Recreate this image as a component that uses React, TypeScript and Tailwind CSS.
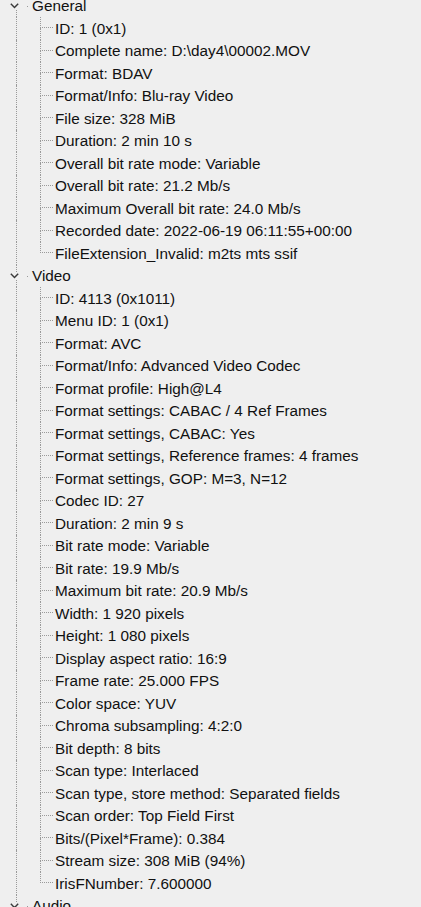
import React from "react";

const general = [
  "ID: 1 (0x1)",
  "Complete name: D:\\day4\\00002.MOV",
  "Format: BDAV",
  "Format/Info: Blu-ray Video",
  "File size: 328 MiB",
  "Duration: 2 min 10 s",
  "Overall bit rate mode: Variable",
  "Overall bit rate: 21.2 Mb/s",
  "Maximum Overall bit rate: 24.0 Mb/s",
  "Recorded date: 2022-06-19 06:11:55+00:00",
  "FileExtension_Invalid: m2ts mts ssif",
];

const video = [
  "ID: 4113 (0x1011)",
  "Menu ID: 1 (0x1)",
  "Format: AVC",
  "Format/Info: Advanced Video Codec",
  "Format profile: High@L4",
  "Format settings: CABAC / 4 Ref Frames",
  "Format settings, CABAC: Yes",
  "Format settings, Reference frames: 4 frames",
  "Format settings, GOP: M=3, N=12",
  "Codec ID: 27",
  "Duration: 2 min 9 s",
  "Bit rate mode: Variable",
  "Bit rate: 19.9 Mb/s",
  "Maximum bit rate: 20.9 Mb/s",
  "Width: 1 920 pixels",
  "Height: 1 080 pixels",
  "Display aspect ratio: 16:9",
  "Frame rate: 25.000 FPS",
  "Color space: YUV",
  "Chroma subsampling: 4:2:0",
  "Bit depth: 8 bits",
  "Scan type: Interlaced",
  "Scan type, store method: Separated fields",
  "Scan order: Top Field First",
  "Bits/(Pixel*Frame): 0.384",
  "Stream size: 308 MiB (94%)",
  "IrisFNumber: 7.600000",
];

const audio = ["ID: 4352 (0x1100)", "Menu ID: 1 (0x1)", "Format: AC-3"];

function Header({ label, first }: { label: string; first?: boolean }) {
  return (
    <div className="flex h-[22.5px] items-stretch">
      <div className="flex w-[24px] flex-col">
        <div className={"ml-[16px] h-[7px] " + (first ? "" : "border-l border-dotted border-[#9a9a9a]")} />
        <div className="flex h-[8px] items-center">
          <svg width="9" height="6" viewBox="0 0 9 6" className="ml-[10px]">
            <path d="M0.8 0.8 L4.5 4.6 L8.2 0.8" fill="none" stroke="#3a3a3a" strokeWidth="1.4" />
          </svg>
        </div>
        <div className="ml-[16px] flex-1 border-l border-dotted border-[#9a9a9a]" />
      </div>
      <div className="flex items-center">
        <div className="ml-[3px] h-px w-px bg-[#9a9a9a]" />
        <span className="ml-[4px]">{label}</span>
      </div>
    </div>
  );
}

function Child({ label, last }: { label: string; last?: boolean }) {
  return (
    <div className="flex h-[22.5px] items-stretch">
      <div className="ml-[16px] w-[24px] border-l border-dotted border-[#9a9a9a]" />
      <div className="flex w-[13px] flex-col">
        <div className="h-[11px] border-b border-l border-dotted border-[#9a9a9a]" />
        <div className={"flex-1 " + (last ? "" : "border-l border-dotted border-[#9a9a9a]")} />
      </div>
      <div className="flex items-center pl-[2px] whitespace-nowrap">{label}</div>
    </div>
  );
}

function Group({ label, items, first }: { label: string; items: string[]; first?: boolean }) {
  return (
    <div>
      <Header label={label} first={first} />
      {items.map((t, i) => (
        <Child key={i} label={t} last={i === items.length - 1} />
      ))}
    </div>
  );
}

export default function App() {
  return (
    <div className="h-[907px] w-[421px] overflow-hidden bg-[#efefef] font-['Liberation_Sans',Arial,sans-serif] text-[15.3px] leading-none text-[#111111]">
      <div className="-mt-[5.25px]">
        <Group label="General" items={general} first />
        <Group label="Video" items={video} />
        <Group label="Audio" items={audio} />
      </div>
    </div>
  );
}
